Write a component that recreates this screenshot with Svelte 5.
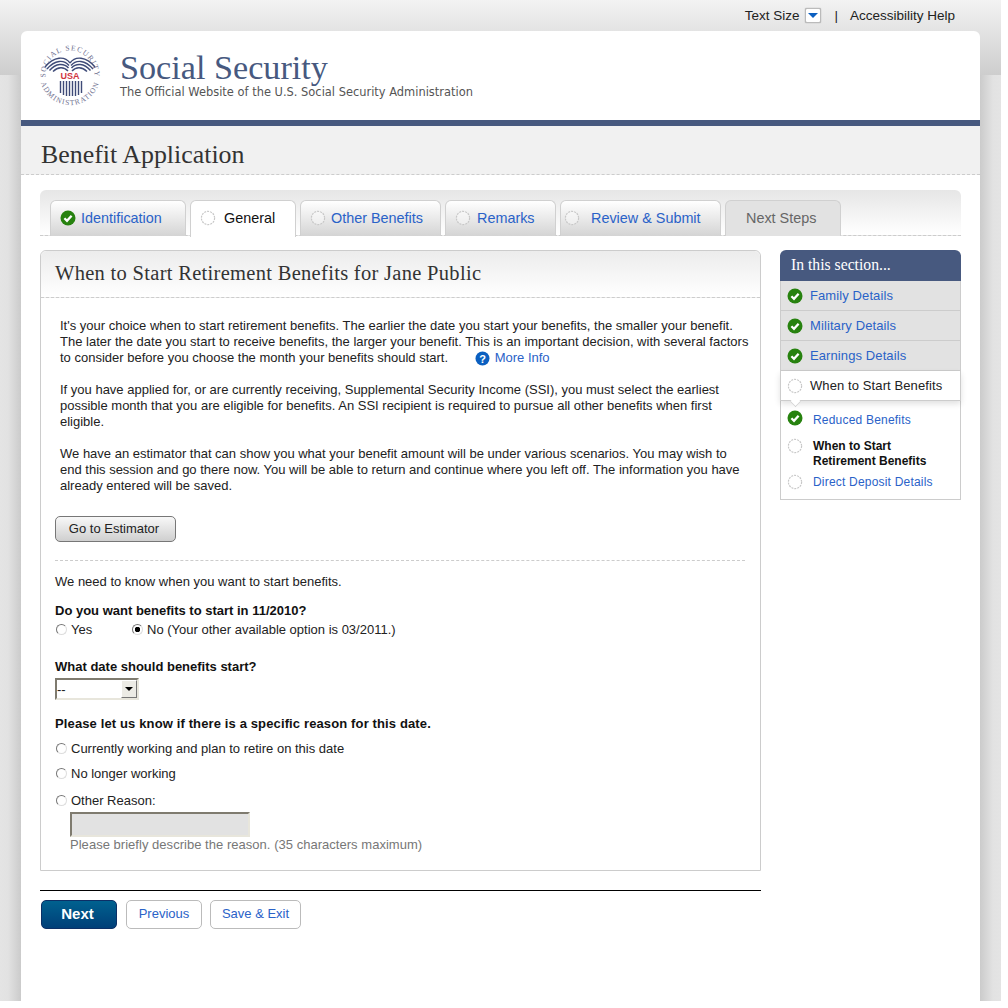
<script>
  const tabs = [
    { label: 'Identification', state: 'done', width: 136, pad: 9, gap: 5 },
    { label: 'General', state: 'current', width: 106, pad: 9, gap: 8 },
    { label: 'Other Benefits', state: 'todo', width: 141, pad: 9, gap: 5 },
    { label: 'Remarks', state: 'todo', width: 111, pad: 9, gap: 6 },
    { label: 'Review & Submit', state: 'todo', width: 161, pad: 3, gap: 11 },
    { label: 'Next Steps', state: 'off', width: 116, pad: 20, gap: 0 }
  ];
  const sections = ['Family Details', 'Military Details', 'Earnings Details'];
</script>

{#snippet check()}
  <svg class="ico" width="16" height="16" viewBox="0 0 16 16">
    <circle cx="8" cy="8" r="7.5" fill="#27820f" />
    <path d="M4.4 8.2 7 10.8 11.6 5.8" fill="none" stroke="#fff" stroke-width="2.3" />
  </svg>
{/snippet}

{#snippet ring()}
  <svg class="ico" width="16" height="16" viewBox="0 0 16 16">
    <circle cx="8" cy="8" r="6.6" fill="#fff" fill-opacity="0.4" stroke="#c8c8c8" stroke-width="1.2" stroke-dasharray="2 1" />
  </svg>
{/snippet}

<div class="page">
  <div class="topband"></div>
  <div class="sideband"></div>

  <div class="utility">
    <span>Text Size</span>
    <span class="sizebtn"><i></i></span>
    <span class="pipe">|</span>
    <span>Accessibility Help</span>
  </div>

  <div class="card">
    <header class="masthead">
      <svg class="seal" width="62" height="64" viewBox="0 0 62 64">
        <defs>
          <path id="arcTop" d="M8.4 41.400 A24.500 24.500 0 1 1 53.600 41.400" />
          <path id="arcBot" d="M1.600 38 A30 30 0 0 0 60.400 38" />
        </defs>
        <text class="sealtext top" text-anchor="middle"><textPath href="#arcTop" startOffset="50%">SOCIAL SECURITY</textPath></text>
        <text class="sealtext" text-anchor="middle"><textPath href="#arcBot" startOffset="50%">ADMINISTRATION</textPath></text>
        <g fill="none" stroke="#3f4b78" stroke-width="1.4">
          <path d="M31 20C26 13 15 13 6 24" />
          <path d="M30 22.500C25 16.500 16 16.500 8 26" />
          <path d="M29.500 25C25 20 17 20 10.500 27.500" />
          <path d="M29 28C25 23.500 19 23.500 14 28.500" />
          <path d="M31 20C36 13 47 13 56 24" />
          <path d="M32 22.500C37 16.500 46 16.500 54 26" />
          <path d="M32.500 25C37 20 45 20 51.500 27.500" />
          <path d="M33 28C37 23.500 43 23.500 48 28.500" />
        </g>
        <text class="sealusa" x="31" y="36" text-anchor="middle">USA</text>
        <path stroke="#3f4b78" stroke-width="1.4" d="M21.500 38V50M24.500 38V52M27.500 38V53M30.500 38V53M33.500 38V53M36.500 38V53M39.500 38V52M42.500 38V50" />
      </svg>
      <div class="brand">
        <div class="brandname">Social Security</div>
        <div class="tagline">The Official Website of the U.S. Social Security Administration</div>
      </div>
    </header>

    <div class="apptitle"><h1>Benefit Application</h1></div>

    <div class="content">
      <nav class="tabs">
        {#each tabs as tab}
          <div class="tab {tab.state}" style="width: {tab.width}px; padding-left: {tab.pad}px; gap: {tab.gap}px">
            {#if tab.state === 'done'}{@render check()}{:else if tab.state !== 'off'}{@render ring()}{/if}
            <span>{tab.label}</span>
          </div>
        {/each}
      </nav>

      <div class="columns">
        <div class="maincol">
          <section class="panel">
            <h2>When to Start Retirement Benefits for Jane Public</h2>
            <div class="panelbody">
              <p class="intro">
                It's your choice when to start retirement benefits. The earlier the date you start your benefits, the smaller your benefit.<br />
                The later the date you start to receive benefits, the larger your benefit. This is an important decision, with several factors<br />
                to consider before you choose the month your benefits should start.
                <span class="more">
                  <svg width="15" height="15" viewBox="0 0 15 15"><circle cx="7.5" cy="7.5" r="7" fill="#0b5fc0" /><text x="7.5" y="11.5" class="qmark" text-anchor="middle">?</text></svg>
                  <a href="#more">More Info</a>
                </span>
              </p>
              <p class="intro">
                If you have applied for, or are currently receiving, Supplemental Security Income (SSI), you must select the earliest<br />
                possible month that you are eligible for benefits. An SSI recipient is required to pursue all other benefits when first<br />
                eligible.
              </p>
              <p class="intro">
                We have an estimator that can show you what your benefit amount will be under various scenarios. You may wish to<br />
                end this session and go there now. You will be able to return and continue where you left off. The information you have<br />
                already entered will be saved.
              </p>

              <button class="estimator" type="button">Go to Estimator</button>
              <div class="dashed"></div>

              <p class="need">We need to know when you want to start benefits.</p>

              <div class="question">Do you want benefits to start in 11/2010?</div>
              <div class="yesno">
                <label class="yes"><input type="radio" name="start" />Yes</label>
                <label><input type="radio" name="start" checked />No (Your other available option is 03/2011.)</label>
              </div>

              <div class="question date">What date should benefits start?</div>
              <div class="select">
                <select><option>--</option></select>
                <span class="arrow"><i></i></span>
              </div>

              <div class="question reason">Please let us know if there is a specific reason for this date.</div>
              <label class="opt"><input type="radio" name="why" />Currently working and plan to retire on this date</label>
              <label class="opt"><input type="radio" name="why" />No longer working</label>
              <label class="opt last"><input type="radio" name="why" />Other Reason:</label>
              <div class="otherbox">
                <input type="text" disabled />
                <div class="hint">Please briefly describe the reason. (35 characters maximum)</div>
              </div>
            </div>
          </section>

          <div class="actions">
            <button class="next" type="button">Next</button>
            <button class="ghost prev" type="button">Previous</button>
            <button class="ghost" type="button">Save &amp; Exit</button>
          </div>
        </div>

        <aside class="side">
          <div class="sidehead">In this section...</div>
          {#each sections as s}
            <div class="sideitem">{@render check()}<span>{s}</span></div>
          {/each}
          <div class="sideitem active">{@render ring()}<span>When to Start Benefits</span><i class="notch"></i></div>
          <div class="subnav">
            <div class="sub">{@render check()}<a href="#a">Reduced Benefits</a></div>
            <div class="sub cur">{@render ring()}<strong>When to Start<br />Retirement Benefits</strong></div>
            <div class="sub">{@render ring()}<a href="#b">Direct Deposit Details</a></div>
          </div>
        </aside>
      </div>
    </div>
  </div>
</div>

<style>
  :global(body) {
    margin: 0;
    background: #fff;
  }
  .page {
    position: relative;
    width: 1001px;
    height: 1001px;
    overflow: hidden;
    font-family: "Liberation Sans", Arial, sans-serif;
    font-size: 13px;
    color: #222;
    background: #e2e2e2;
  }
  .topband {
    position: absolute;
    inset: 0 0 auto 0;
    height: 75px;
    background: linear-gradient(#f3f3f3, #cdcdcd);
  }
  .sideband {
    position: absolute;
    inset: 75px 0 0 0;
    background: linear-gradient(90deg, #e4e4e4 0, #e2e2e2 8px, #cbcbcb 21px, #cbcbcb 980px, #e2e2e2 993px, #e4e4e4 100%);
  }
  .utility {
    position: relative;
    height: 31px;
    display: flex;
    align-items: center;
    justify-content: flex-end;
    padding-right: 46px;
    font-size: 13.5px;
    color: #222;
  }
  .sizebtn {
    width: 14px;
    height: 13px;
    margin-left: 6px;
    border: 1px solid #bbb;
    border-radius: 2px;
    background: #fff;
    box-shadow: 0 0 1px #777;
    display: flex;
    align-items: center;
    justify-content: center;
  }
  .sizebtn i {
    border: 5px solid transparent;
    border-top: 5px solid #0b5fc0;
    border-bottom: 0;
  }
  .pipe {
    margin: 0 12px 0 13px;
  }
  .card {
    position: relative;
    margin: 0 21px;
    width: 959px;
    height: 970px;
    background: #fff;
    border-radius: 6px 6px 0 0;
  }
  .masthead {
    height: 89px;
    box-sizing: border-box;
    padding: 12px 0 0 18px;
    display: flex;
  }
  .seal {
    flex: none;
  }
  .sealtext {
    font-family: "Liberation Serif", serif;
    font-size: 7.5px;
    fill: #6f7190;
    letter-spacing: 1px;
  }
  .sealtext.top {
    letter-spacing: 1.1px;
  }
  .sealusa {
    font-family: "Liberation Sans", sans-serif;
    font-weight: bold;
    font-size: 9px;
    fill: #d0343f;
  }
  .brand {
    margin-left: 19px;
    padding-top: 6px;
  }
  .brandname {
    font-family: "Liberation Serif", serif;
    font-size: 34.2px;
    line-height: 37px;
    color: #47597f;
  }
  .tagline {
    font-family: "DejaVu Sans", sans-serif;
    font-size: 11.45px;
    line-height: 13px;
    color: #555;
  }
  .apptitle {
    box-sizing: border-box;
    border-top: 6px solid #47597f;
    height: 55px;
    border-bottom: 1px dashed #ccc;
    background: #f1f1f1;
    padding-left: 20px;
  }
  .apptitle h1 {
    margin: 0;
    padding-top: 14px;
    font: normal 25.9px/30px "Liberation Serif", serif;
    color: #333;
  }
  .content {
    padding: 15px 19px 0;
  }
  .tabs {
    height: 46px;
    padding: 10px 0 0 10px;
    box-sizing: border-box;
    display: flex;
    gap: 4px;
    width: 921px;
    border-radius: 6px 6px 0 0;
    border-bottom: 1px dashed #ccc;
    background: linear-gradient(#e6e6e6, #fff);
  }
  .tab {
    box-sizing: border-box;
    height: 36px;
    display: flex;
    align-items: center;
    padding-bottom: 2px;
    border: 1px solid #d0d0d0;
    border-bottom: 0;
    border-radius: 6px 6px 0 0;
    font-size: 14.4px;
    color: #2a62c8;
    background: linear-gradient(#fff, #d4d4d4);
  }
  .tab.current {
    color: #111;
    background: #fff;
    height: 37px;
  }
  .tab.off {
    color: #666;
    background: #e2e2e2;
  }
  .columns {
    display: flex;
    justify-content: space-between;
    width: 921px;
    margin-top: 14px;
  }
  .maincol {
    width: 721px;
  }
  .panel {
    box-sizing: border-box;
    height: 621px;
    border: 1px solid #ccc;
    border-radius: 6px 6px 0 0;
  }
  .panel h2 {
    margin: 0;
    height: 47px;
    box-sizing: border-box;
    padding: 9px 0 0 14px;
    font: normal 20.5px/26px "Liberation Serif", serif;
    letter-spacing: 0.3px;
    color: #333;
    border-bottom: 1px dashed #ccc;
    border-radius: 6px 6px 0 0;
    background: linear-gradient(#ececec, #fff);
  }
  .panelbody {
    padding: 20px 0 0 14px;
  }
  p {
    margin: 0;
  }
  .intro {
    padding-left: 5px;
    line-height: 16px;
    margin-bottom: 16px;
    white-space: nowrap;
  }
  .more {
    display: inline-flex;
    align-items: center;
    gap: 5px;
    margin-left: 23px;
    vertical-align: top;
  }
  .qmark {
    font: bold 11px "Liberation Sans", sans-serif;
    fill: #fff;
  }
  a {
    color: #2a62c8;
    text-decoration: none;
  }
  .estimator {
    display: block;
    width: 121px;
    height: 26px;
    margin-top: 22px;
    padding: 0 3px 2px 0;
    border: 1px solid #777;
    border-radius: 5px;
    font: 13px "Liberation Sans", sans-serif;
    color: #222;
    background: linear-gradient(#f8f8f8, #cfcfcf);
  }
  .dashed {
    width: 690px;
    margin-top: 18px;
    border-top: 1px dashed #ccc;
  }
  .need {
    margin-top: 13px;
    line-height: 16px;
  }
  .question {
    margin-top: 13px;
    line-height: 16px;
    font-weight: bold;
    color: #111;
  }
  .yesno {
    display: flex;
    line-height: 16px;
    margin-top: 3px;
  }
  .yes {
    width: 76px;
  }
  label {
    display: block;
  }
  input[type="radio"] {
    appearance: none;
    width: 11px;
    height: 11px;
    margin: 0 4px 0 1px;
    vertical-align: -1px;
    border: 1px solid #777;
    border-right-color: #ddd;
    border-bottom-color: #ddd;
    border-radius: 50%;
    background: #fff;
  }
  input[type="radio"]:checked {
    background: radial-gradient(circle, #000 0 2.5px, #fff 3px);
  }
  .question.date {
    margin-top: 21px;
  }
  .select {
    display: flex;
    width: 84px;
    height: 22px;
    margin-top: 3px;
    box-sizing: border-box;
    border: 2px solid #7f7b6f;
    border-right-color: #e8e6dc;
    border-bottom-color: #e8e6dc;
  }
  .select select {
    appearance: none;
    flex: 1;
    min-width: 0;
    border: 0;
    padding: 0;
    background: #fff;
    font: 13px "Liberation Sans", sans-serif;
    color: #222;
  }
  .arrow {
    width: 16px;
    box-sizing: border-box;
    background: #ecebe5;
    border: 1px solid #777;
    border-top-color: #fff;
    border-left-color: #fff;
    display: flex;
    align-items: center;
    justify-content: center;
  }
  .arrow i {
    border: 4px solid transparent;
    border-top: 4px solid #000;
    border-bottom: 0;
  }
  .question.reason {
    margin-top: 16px;
    letter-spacing: 0.13px;
  }
  .opt {
    line-height: 16px;
    margin-top: 9px;
  }
  .opt.last {
    margin-top: 11px;
  }
  .otherbox {
    padding-left: 15px;
    margin-top: 3px;
  }
  .otherbox input {
    display: block;
    box-sizing: border-box;
    width: 180px;
    height: 25px;
    margin: 0;
    border: 2px solid #7f7b6f;
    border-right-color: #e8e6dc;
    border-bottom-color: #e8e6dc;
    background: #e2e2e2;
  }
  .hint {
    line-height: 16px;
    letter-spacing: 0.03px;
    color: #777;
  }
  .actions {
    margin-top: 19px;
    padding: 9px 0 0 1px;
    border-top: 1px solid #000;
    display: flex;
  }
  .actions button {
    box-sizing: border-box;
    height: 29px;
    padding: 0 0 2px;
    border-radius: 5px;
    font: 13px "Liberation Sans", sans-serif;
  }
  .actions .next {
    width: 76px;
    padding-right: 3px;
    font-weight: bold;
    font-size: 15px;
    color: #fff;
    border: 1px solid #0c2f66;
    background: linear-gradient(#00618f, #003f78);
  }
  .ghost {
    width: 91px;
    color: #2a62c8;
    border: 1px solid #bbb;
    background: #fff;
  }
  .ghost.prev {
    width: 76px;
    margin: 0 8px 0 9px;
  }
  .side {
    width: 181px;
  }
  .sidehead {
    height: 31px;
    box-sizing: border-box;
    padding: 6px 0 0 11px;
    border-radius: 6px 6px 0 0;
    font: normal 15.7px/18px "Liberation Serif", serif;
    color: #fff;
    background: #47597f;
  }
  .sideitem {
    position: relative;
    box-sizing: border-box;
    height: 30px;
    display: flex;
    align-items: center;
    gap: 7px;
    padding-left: 6px;
    letter-spacing: 0.1px;
    color: #2a62c8;
    background: #e2e2e2;
    border: 1px solid #ccc;
    border-top: 0;
  }
  .sideitem.active {
    color: #222;
    background: #fff;
    box-shadow: 0 3px 6px rgba(0, 0, 0, 0.12);
  }
  .notch {
    position: absolute;
    left: 9px;
    bottom: -7px;
    width: 10px;
    height: 10px;
    transform: rotate(45deg) scale(0.7);
    background: #fff;
    border-right: 1px solid #ccc;
    border-bottom: 1px solid #ccc;
  }
  .subnav {
    height: 99px;
    box-sizing: border-box;
    padding-top: 12px;
    border: 1px solid #ccc;
    border-top: 0;
    font-size: 12px;
    letter-spacing: 0.2px;
  }
  .sub {
    display: flex;
    align-items: flex-start;
    gap: 10px;
    padding-left: 6px;
    line-height: 15px;
    margin-bottom: 11px;
  }
  .sub.cur {
    margin-bottom: 6px;
  }
  .sub strong {
    color: #111;
    letter-spacing: 0;
  }
  .sub .ico {
    margin-top: -1px;
  }
  .sub:first-child .ico {
    margin-top: -3px;
  }
  .ico {
    flex: none;
  }
</style>
